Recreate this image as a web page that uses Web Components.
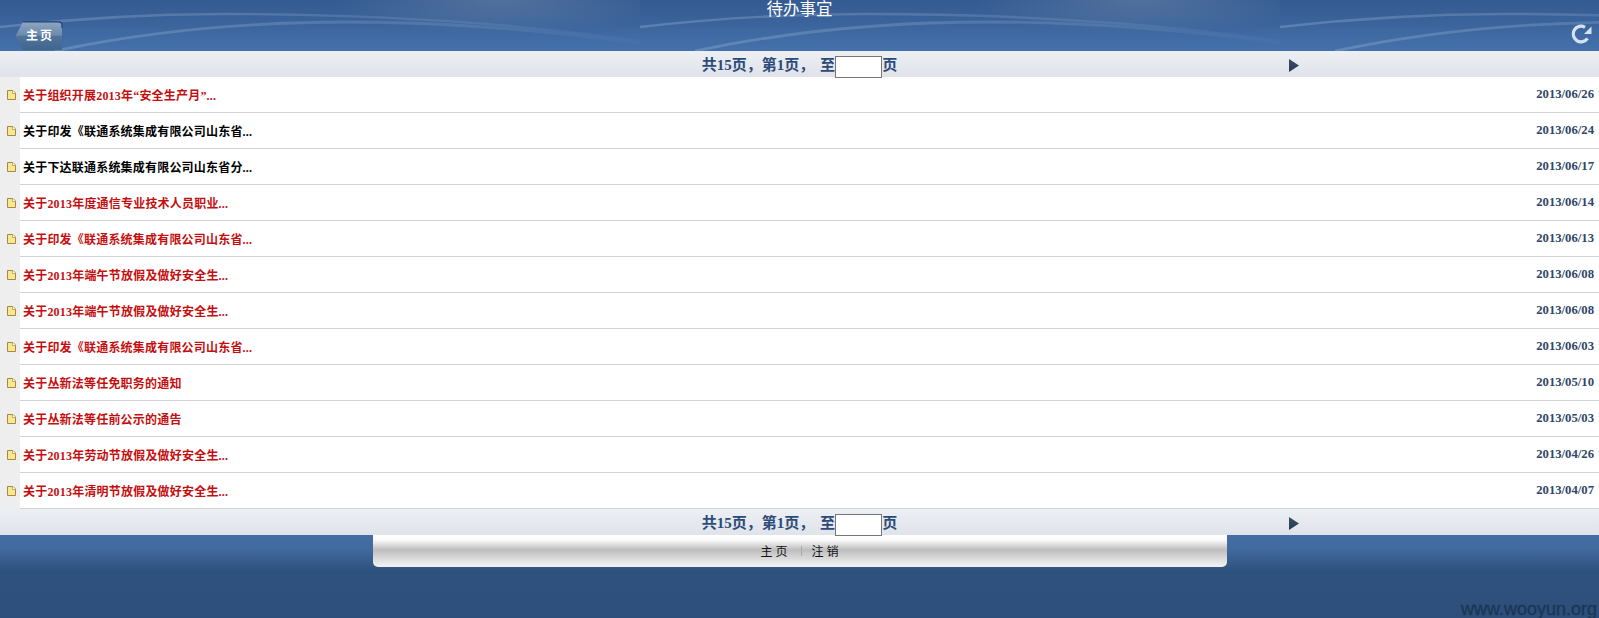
<!DOCTYPE html>
<html lang="zh">
<head>
<meta charset="utf-8">
<title>待办事宜</title>
<style>
	html, body {margin:0; padding:0; background:#2d4f7b;}
	body {width:1599px; height:618px; overflow:hidden; font-family:"Liberation Serif","Noto Sans CJK SC",serif;}
</style>
</head>
<body>

<app-header title-text="待办事宜">
	<home-button slot="left">主页</home-button>
	<refresh-button slot="right"></refresh-button>
</app-header>

<page-bar total="15" current="1"></page-bar>

<todo-list>
	<todo-row urgent date="2013/06/26">关于组织开展2013年“安全生产月”...</todo-row>
	<todo-row date="2013/06/24">关于印发《联通系统集成有限公司山东省...</todo-row>
	<todo-row date="2013/06/17">关于下达联通系统集成有限公司山东省分...</todo-row>
	<todo-row urgent date="2013/06/14">关于2013年度通信专业技术人员职业...</todo-row>
	<todo-row urgent date="2013/06/13">关于印发《联通系统集成有限公司山东省...</todo-row>
	<todo-row urgent date="2013/06/08">关于2013年端午节放假及做好安全生...</todo-row>
	<todo-row urgent date="2013/06/08">关于2013年端午节放假及做好安全生...</todo-row>
	<todo-row urgent date="2013/06/03">关于印发《联通系统集成有限公司山东省...</todo-row>
	<todo-row urgent date="2013/05/10">关于丛新法等任免职务的通知</todo-row>
	<todo-row urgent date="2013/05/03">关于丛新法等任前公示的通告</todo-row>
	<todo-row urgent date="2013/04/26">关于2013年劳动节放假及做好安全生...</todo-row>
	<todo-row urgent date="2013/04/07">关于2013年清明节放假及做好安全生...</todo-row>
</todo-list>

<page-bar total="15" current="1"></page-bar>

<app-footer mark="www.wooyun.org">
	<a>主页</a>
	<i class="sep"></i>
	<a>注销</a>
</app-footer>

<script>
class waveTile extends HTMLElement {
	connectedCallback() {
		const shadowRoot = this.attachShadow({ mode: 'open' });
		shadowRoot.innerHTML = `
			<style>
			:host {display:block; flex:0 0 640px; width:640px; height:51px;}
			svg {display:block;}
			</style>
			<svg width="640" height="51" viewBox="0 0 640 51">
				<defs>
					<linearGradient id="sky" x1="0" y1="0" x2="0" y2="1">
						<stop offset="0" stop-color="#345a91"/>
						<stop offset="0.5" stop-color="#3c659d"/>
						<stop offset="1" stop-color="#4572ab"/>
					</linearGradient>
					<radialGradient id="haze" gradientUnits="userSpaceOnUse" cx="500" cy="0" r="170" gradientTransform="scale(1 .2)">
						<stop offset="0" stop-color="#8a9bae" stop-opacity="0.34"/>
						<stop offset="1" stop-color="#8a9bae" stop-opacity="0"/>
					</radialGradient>
					<linearGradient id="fade" x1="0" y1="0" x2="1" y2="0">
						<stop offset="0" stop-color="#a9c0dc" stop-opacity="0.3"/>
						<stop offset="0.4" stop-color="#a9c0dc" stop-opacity="0.24"/>
						<stop offset="0.8" stop-color="#a9c0dc" stop-opacity="0.12"/>
						<stop offset="1" stop-color="#a9c0dc" stop-opacity="0.03"/>
					</linearGradient>
				</defs>
				<rect width="640" height="51" fill="url(#sky)"/>
				<rect width="640" height="51" fill="url(#haze)"/>
				<path d="M0 27C70 19 140 14 225 14C350 14 500 21 640 41" fill="none" stroke="url(#fade)" stroke-width="2.4"/>
				<path d="M55 51C140 33 240 22 350 22C450 22 550 31 640 43" fill="none" stroke="url(#fade)" stroke-width="2.8"/>
			</svg>
		`;
	}
}

class appHeader extends HTMLElement {
	connectedCallback() {
		const shadowRoot = this.attachShadow({ mode: 'open' });
		shadowRoot.innerHTML = `
			<style>
			:host {display:block; position:relative; height:51px; overflow:hidden; background:#3c659d;}
			.tiles {position:absolute; top:0; left:0; display:flex; width:100%; height:51px; overflow:hidden;}
			.bar {position:relative; display:grid; grid-template-columns:1fr auto 1fr; height:51px;}
			.left {display:flex; align-items:flex-end; padding:0 0 1px 15px;}
			.right {display:flex; justify-content:flex-end; align-items:flex-end; padding:0 6px 7px 0;}
			h1 {margin:0; color:#fff; font:400 16.5px/19px "Liberation Serif","Noto Sans CJK SC",serif;}
			</style>
			<div class="tiles"><wave-tile></wave-tile><wave-tile></wave-tile><wave-tile></wave-tile></div>
			<div class="bar">
				<div class="left"><slot name="left"></slot></div>
				<h1>${this.getAttribute('title-text')}</h1>
				<div class="right"><slot name="right"></slot></div>
			</div>
		`;
	}
}

class homeButton extends HTMLElement {
	connectedCallback() {
		const shadowRoot = this.attachShadow({ mode: 'open' });
		shadowRoot.innerHTML = `
			<style>
			:host {display:block; position:relative; width:48px; height:29px; color:#fff; font:700 12px/27px "Noto Sans CJK SC",sans-serif;}
			svg {position:absolute; top:0; left:0;}
			span {position:relative; display:block; padding-left:11px; letter-spacing:2px;}
			</style>
			<svg width="48" height="29" viewBox="0 0 48 29">
				<defs>
					<linearGradient id="shine" x1="0" y1="0" x2="0" y2="1">
						<stop offset="0" stop-color="#8ea6c2"/>
						<stop offset="0.48" stop-color="#6b8aac"/>
						<stop offset="0.5" stop-color="#52749a"/>
						<stop offset="1" stop-color="#3f668f"/>
					</linearGradient>
				</defs>
				<path d="M8 .8H43.5Q47 .8 47 4V29H8L.5 15Z" fill="url(#shine)"/>
				<path d="M8 .8H43.5Q47 .8 47 4V7" fill="none" stroke="#1f4073" stroke-width="1.2"/>
			</svg>
			<span><slot></slot></span>
		`;
	}
}

class refreshButton extends HTMLElement {
	connectedCallback() {
		const shadowRoot = this.attachShadow({ mode: 'open' });
		shadowRoot.innerHTML = `
			<style>
			:host {display:block; width:23px; height:21px;}
			svg {display:block;}
			</style>
			<svg width="23" height="21" viewBox="0 0 23 21">
				<path d="M15 4.3A7.8 7.8 0 1 0 17.5 15.3" fill="none" stroke="#d5e2f1" stroke-width="3.2"/>
				<path d="M21.5 3.5V11H14Z" fill="#d5e2f1"/>
			</svg>
		`;
	}
}

class pageBar extends HTMLElement {
	connectedCallback() {
		const shadowRoot = this.attachShadow({ mode: 'open' });
		shadowRoot.innerHTML = `
			<style>
			:host {display:block; position:relative; z-index:1; height:26px; background:linear-gradient(#eceff3,#dfe3ea);}
			.bar {display:grid; grid-template-columns:1fr auto 1fr; height:26px; color:#2d4b78; font:700 15px/28px "Liberation Serif","Noto Sans CJK SC",serif;}
			.pager {display:flex; align-items:flex-start; white-space:pre; word-spacing:2px;}
			input {box-sizing:border-box; width:47px; height:22px; margin:5px 0 0; padding:0; border:1px solid #767676; background:#fff;}
			.next {display:flex; align-items:center;}
			.next svg {display:block; margin:1px 0 0 392px;}
			</style>
			<div class="bar">
				<span></span>
				<div class="pager"><span>共${this.getAttribute('total')}页，第${this.getAttribute('current')}页， 至</span><input type="text"><span>页</span></div>
				<div class="next">
					<svg width="10" height="13" viewBox="0 0 10 13">
						<defs><linearGradient id="tip" x1="0" y1="0" x2="0" y2="1"><stop offset="0" stop-color="#3d4f68"/><stop offset="1" stop-color="#263a55"/></linearGradient></defs>
						<path d="M0 0L10 6.5L0 13Z" fill="url(#tip)"/>
					</svg>
				</div>
			</div>
		`;
	}
}

class todoList extends HTMLElement {
	connectedCallback() {
		const shadowRoot = this.attachShadow({ mode: 'open' });
		shadowRoot.innerHTML = `
			<style>
			:host {display:block; background:#fff;}
			</style>
			<slot></slot>
		`;
	}
}

class todoRow extends HTMLElement {
	connectedCallback() {
		const shadowRoot = this.attachShadow({ mode: 'open' });
		shadowRoot.innerHTML = `
			<style>
			:host {display:flex; height:36px; color:#000; font:700 12px/38px "Liberation Serif","Noto Sans CJK SC",serif;}
			:host([urgent]) {color:#c40f10;}
			.mark {display:flex; flex:0 0 20px; align-items:center; justify-content:center; background:#eee;}
			.body {display:flex; flex:1; justify-content:space-between; box-sizing:border-box; height:36px; padding:0 5px 0 3px; border-bottom:1px solid #d2d2d2;}
			.label {letter-spacing:.2px;}
			.date {color:#2f4668; font-size:12.7px; line-height:35px;}
			svg {display:block; margin:-1px 0 0 3px;}
			</style>
			<div class="mark">
				<svg width="9" height="10" viewBox="0 0 9 10">
					<path d="M.5 .5H6L8.5 3V9.5H.5Z" fill="#f6e793" stroke="#a88a3e"/>
					<path d="M5.5 .5V3.5H8.5" fill="#fff" stroke="#b89a4c" stroke-width=".8"/>
				</svg>
			</div>
			<div class="body">
				<span class="label"><slot></slot></span>
				<span class="date">${this.getAttribute('date')}</span>
			</div>
		`;
	}
}

class appFooter extends HTMLElement {
	connectedCallback() {
		const shadowRoot = this.attachShadow({ mode: 'open' });
		shadowRoot.innerHTML = `
			<style>
			:host {display:block; position:relative; height:83px; background:linear-gradient(#446da3 0,#416a9f 14px,#2f517d 36px,#2d4f7b 100%);}
			.bar {display:flex; justify-content:center; box-sizing:border-box; width:854px; height:32px; margin:0 auto; padding-left:3px; border-radius:0 0 5px 5px;
				background:linear-gradient(#fff 0,#fafafa 5px,#bdbdbd 15px,#c8c8c8 18px,#ececec 29px,#f2f2f2 100%);
				color:#111; font:400 12px/32px "Noto Sans CJK SC",sans-serif; letter-spacing:3px;}
			::slotted(a) {display:block;}
			::slotted(.sep) {display:block; width:1px; height:10px; margin:11px 10px 0; background:#a9a9a9;}
			.mark {position:absolute; right:2px; bottom:-2px; color:#1b3656; font:400 18px/21px "Liberation Sans",sans-serif; -webkit-text-stroke:.3px #1b3656;}
			</style>
			<div class="bar"><slot></slot></div>
			<div class="mark">${this.getAttribute('mark')}</div>
		`;
	}
}

customElements.define('wave-tile', waveTile);
customElements.define('app-header', appHeader);
customElements.define('home-button', homeButton);
customElements.define('refresh-button', refreshButton);
customElements.define('page-bar', pageBar);
customElements.define('todo-list', todoList);
customElements.define('todo-row', todoRow);
customElements.define('app-footer', appFooter);
</script>
</body>
</html>
